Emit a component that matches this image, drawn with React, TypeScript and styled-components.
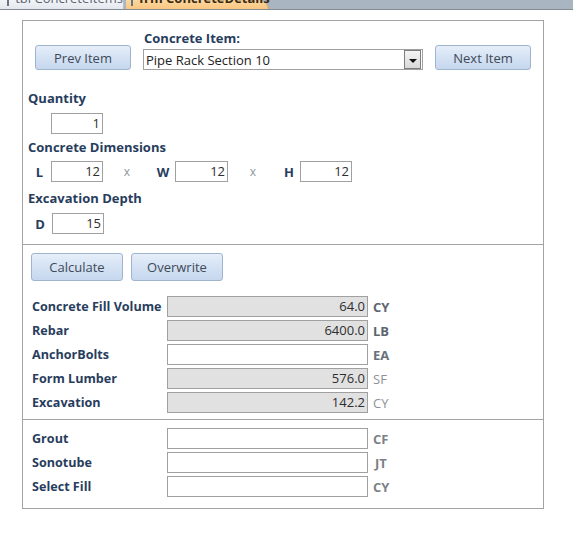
import React from "react";
import styled, { createGlobalStyle } from "styled-components";

const Global = createGlobalStyle`
  html, body { margin: 0; padding: 0; background: #ffffff; }
  body { font-family: "Open Sans", "Noto Sans", sans-serif; }
  * { box-sizing: border-box; }
`;

const TabBar = styled.div`
  height: 10px;
  display: flex;
  background: #a9b5c1;
  border-bottom: 1px solid #858b93;
  overflow: hidden;
`;

const Tab = styled.div<{ $active?: boolean }>`
  width: ${(p) => (p.$active ? 143 : 124)}px;
  margin-right: ${(p) => (p.$active ? 0 : 2)}px;
  height: ${(p) => (p.$active ? 10 : 9)}px;
  display: flex;
  align-items: flex-start;
  gap: 6px;
  padding-left: ${(p) => (p.$active ? 5 : 7)}px;
  background: ${(p) =>
    p.$active ? "linear-gradient(#fbd8a1, #f9c47c)" : "linear-gradient(#f2f4f7, #e3e8ee)"};
  border-top-right-radius: ${(p) => (p.$active ? 10 : 0)}px;
  border-right: 1px solid ${(p) => (p.$active ? "#d9a45a" : "#b7c0ca")};
  color: ${(p) => (p.$active ? "#3b2a12" : "#5b6470")};
  font-weight: ${(p) => (p.$active ? 700 : 400)};
  font-size: 13px;
  line-height: 16px;
  white-space: nowrap;
`;

const TabText = styled.span`
  margin-top: -10px;
`;

const TabIcon = styled.div`
  width: 11px;
  height: 6px;
  border: 1px solid #6b7580;
  border-top: none;
  background: #ffffff;
`;

const Form = styled.div`
  margin: 10px 0 0 22px;
  width: 522px;
  border: 1px solid #a3a3a3;
  display: flex;
  flex-direction: column;
`;

const Section = styled.div<{ $pt: number; $pb: number; $divider?: boolean }>`
  padding: ${(p) => p.$pt}px 0 ${(p) => p.$pb}px 0;
  border-top: ${(p) => (p.$divider ? "1px solid #a3a3a3" : "none")};
  display: flex;
  flex-direction: column;
`;

const TopRow = styled.div`
  display: flex;
  align-items: flex-end;
  padding-left: 12px;
  gap: 12px;
`;

const Button = styled.button<{ $w: number; $h: number }>`
  width: ${(p) => p.$w}px;
  height: ${(p) => p.$h}px;
  border: 1px solid #9fb4cf;
  border-radius: 3px;
  background: linear-gradient(#e6eef9 0%, #d6e3f4 45%, #c6d7ee 100%);
  color: #3e4a58;
  font-family: "Open Sans", "Noto Sans", sans-serif;
  font-size: 13px;
  padding: 0;
  cursor: pointer;
`;

const ItemColumn = styled.div`
  width: 280px;
  display: flex;
  flex-direction: column;
  gap: 3px;
`;

const Label = styled.div<{ $pl?: number; $mt?: number }>`
  padding-left: ${(p) => p.$pl ?? 5}px;
  margin-top: ${(p) => p.$mt ?? 0}px;
  font-weight: 700;
  font-size: 13px;
  line-height: 16px;
  color: #283d5d;
  white-space: nowrap;
`;

const Combo = styled.div`
  height: 21px;
  border: 1px solid #a0a0a0;
  display: flex;
  align-items: center;
  justify-content: space-between;
  padding: 0 1px 0 2px;
  font-size: 13px;
  color: #222222;
`;

const DropButton = styled.div`
  width: 17px;
  height: 19px;
  border: 1px solid #7d7d7d;
  background: linear-gradient(#f4f4f4, #d9d9d9);
  display: flex;
  align-items: center;
  justify-content: center;
`;

const Triangle = styled.div`
  width: 0;
  height: 0;
  border-left: 4px solid transparent;
  border-right: 4px solid transparent;
  border-top: 4px solid #111111;
  margin-top: 2px;
`;

const Field = styled.div<{ $w: number; $grey?: boolean }>`
  width: ${(p) => p.$w}px;
  height: 21px;
  border: 1px solid #a0a0a0;
  background: ${(p) => (p.$grey ? "#e1e1e1" : "#ffffff")};
  text-align: right;
  padding-right: 2px;
  font-size: 13px;
  line-height: 19px;
  color: #2e2e2e;
`;

const FieldRow = styled.div<{ $mt: number }>`
  display: flex;
  align-items: center;
  margin-top: ${(p) => p.$mt}px;
  padding-left: 5px;
`;

const Indent = styled.div`
  width: 23px;
`;

const Letter = styled.div<{ $w: number }>`
  width: ${(p) => p.$w}px;
  text-align: center;
  font-weight: 700;
  font-size: 13px;
  color: #283d5d;
`;

const Times = styled.div<{ $w: number }>`
  width: ${(p) => p.$w}px;
  text-align: center;
  font-size: 12px;
  color: #8f959c;
`;

const ButtonRow = styled.div`
  display: flex;
  gap: 8px;
  padding-left: 8px;
`;

const ResultList = styled.div<{ $mt: number }>`
  display: flex;
  flex-direction: column;
  gap: 3px;
  margin-top: ${(p) => p.$mt}px;
`;

const ResultRow = styled.div`
  display: grid;
  grid-template-columns: 135px 201px auto;
  align-items: center;
  padding-left: 9px;
`;

const RowLabel = styled.div`
  font-weight: 700;
  font-size: 12.6px;
  color: #283d5d;
  white-space: nowrap;
`;

const Unit = styled.div<{ $bold?: boolean; $color: string; $pl: number }>`
  padding-left: ${(p) => p.$pl}px;
  font-size: 13px;
  font-weight: ${(p) => (p.$bold ? 700 : 400)};
  color: ${(p) => p.$color};
`;

type Row = { label: string; value: string; grey: boolean; unit: string; bold: boolean; color: string; pl: number };

const results: Row[] = [
  { label: "Concrete Fill Volume", value: "64.0", grey: true, unit: "CY", bold: true, color: "#5d6570", pl: 5 },
  { label: "Rebar", value: "6400.0", grey: true, unit: "LB", bold: true, color: "#5d6570", pl: 5 },
  { label: "AnchorBolts", value: "", grey: false, unit: "EA", bold: true, color: "#68707a", pl: 5 },
  { label: "Form Lumber", value: "576.0", grey: true, unit: "SF", bold: false, color: "#8d9197", pl: 5 },
  { label: "Excavation", value: "142.2", grey: true, unit: "CY", bold: false, color: "#8d9197", pl: 5 },
];

const extras: Row[] = [
  { label: "Grout", value: "", grey: false, unit: "CF", bold: true, color: "#7d8186", pl: 5 },
  { label: "Sonotube", value: "", grey: false, unit: "JT", bold: true, color: "#7d8186", pl: 7 },
  { label: "Select Fill", value: "", grey: false, unit: "CY", bold: true, color: "#7d8186", pl: 5 },
];

const Results = ({ rows, mt }: { rows: Row[]; mt: number }) => (
  <ResultList $mt={mt}>
    {rows.map((r) => (
      <ResultRow key={r.label}>
        <RowLabel>{r.label}</RowLabel>
        <Field $w={201} $grey={r.grey}>{r.value}</Field>
        <Unit $bold={r.bold} $color={r.color} $pl={r.pl}>{r.unit}</Unit>
      </ResultRow>
    ))}
  </ResultList>
);

export default function App() {
  return (
    <>
      <Global />
      <TabBar>
        <Tab>
          <TabIcon />
          <TabText>tbl ConcreteItems</TabText>
        </Tab>
        <Tab $active>
          <TabIcon />
          <TabText>frm ConcreteDetails</TabText>
        </Tab>
      </TabBar>
      <Form>
        <Section $pt={9} $pb={10}>
          <TopRow>
            <Button $w={96} $h={25}>Prev Item</Button>
            <ItemColumn>
              <Label $pl={1}>Concrete Item:</Label>
              <Combo>
                <span>Pipe Rack Section 10</span>
                <DropButton>
                  <Triangle />
                </DropButton>
              </Combo>
            </ItemColumn>
            <Button $w={96} $h={25}>Next Item</Button>
          </TopRow>
          <Label $mt={20}>Quantity</Label>
          <FieldRow $mt={7}>
            <Indent />
            <Field $w={52}>1</Field>
          </FieldRow>
          <Label $mt={5}>Concrete Dimensions</Label>
          <FieldRow $mt={6}>
            <Letter $w={23}>L</Letter>
            <Field $w={52}>12</Field>
            <Times $w={48}>x</Times>
            <Letter $w={24}>W</Letter>
            <Field $w={53}>12</Field>
            <Times $w={50}>x</Times>
            <Letter $w={22}>H</Letter>
            <Field $w={52}>12</Field>
          </FieldRow>
          <Label $mt={8}>Excavation Depth</Label>
          <FieldRow $mt={7}>
            <Letter $w={24}>D</Letter>
            <Field $w={52}>15</Field>
          </FieldRow>
        </Section>
        <Section $pt={8} $pb={6} $divider>
          <ButtonRow>
            <Button $w={92} $h={28}>Calculate</Button>
            <Button $w={92} $h={28}>Overwrite</Button>
          </ButtonRow>
          <Results rows={results} mt={15} />
        </Section>
        <Section $pt={8} $pb={11} $divider>
          <Results rows={extras} mt={0} />
        </Section>
      </Form>
    </>
  );
}
